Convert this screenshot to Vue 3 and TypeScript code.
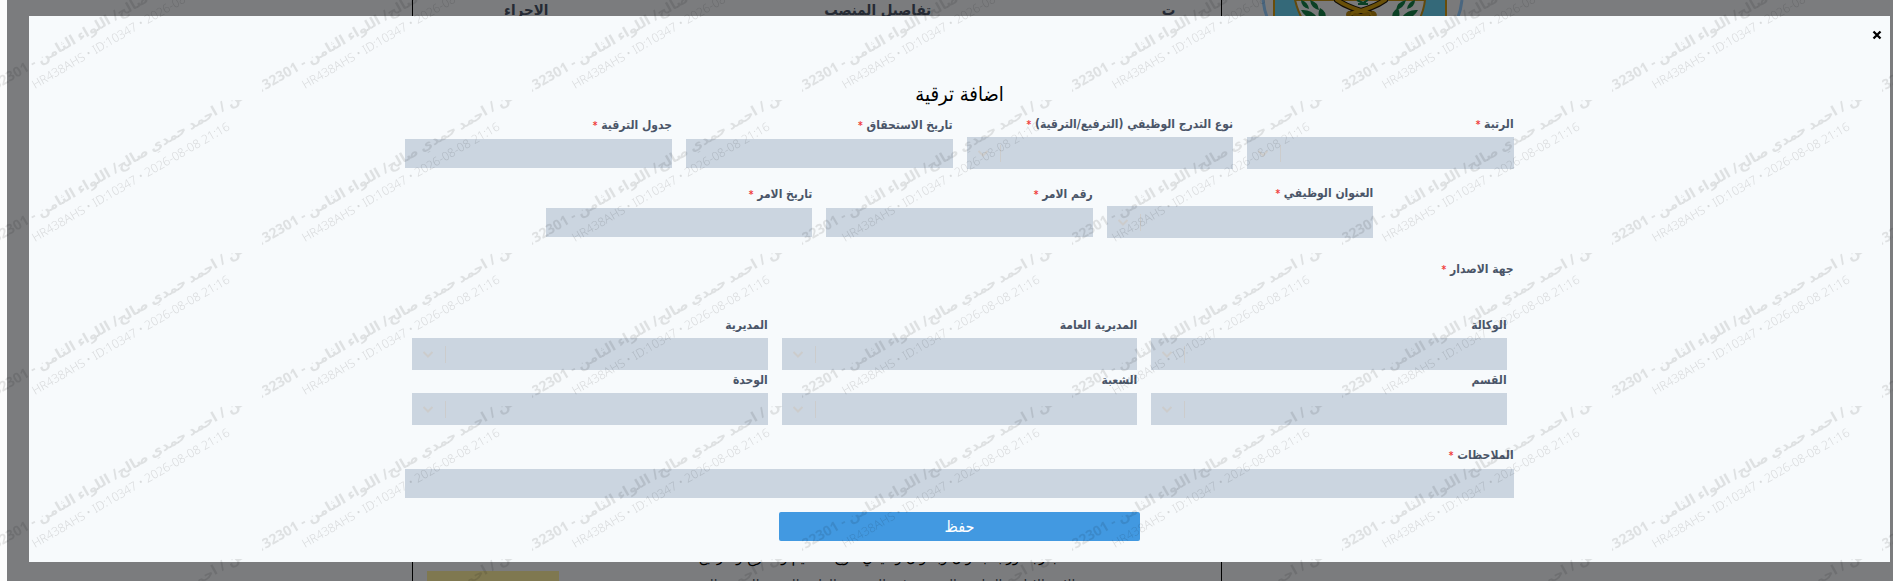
<script setup lang="ts">
import { ref } from 'vue'

interface Field {
  id: string
  label: string
  kind: 'select' | 'text'
  required?: boolean
}

const firstRow: Field[] = [
  { id: 'rank', label: 'الرتبة', kind: 'select', required: true },
  { id: 'gradeType', label: 'نوع التدرج الوظيفي (الترفيع/الترقية)', kind: 'select', required: true },
  { id: 'dueDate', label: 'تاريخ الاستحقاق', kind: 'text', required: true },
  { id: 'schedule', label: 'جدول الترقية', kind: 'text', required: true },
]
const secondRow: Field[] = [
  { id: 'jobTitle', label: 'العنوان الوظيفي', kind: 'select', required: true },
  { id: 'orderNo', label: 'رقم الامر', kind: 'text', required: true },
  { id: 'orderDate', label: 'تاريخ الامر', kind: 'text', required: true },
]
const issuer: Field[] = [
  { id: 'agency', label: 'الوكالة', kind: 'select' },
  { id: 'generalDirectorate', label: 'المديرية العامة', kind: 'select' },
  { id: 'directorate', label: 'المديرية', kind: 'select' },
  { id: 'department', label: 'القسم', kind: 'select' },
  { id: 'division', label: 'الشعبة', kind: 'select' },
  { id: 'unit', label: 'الوحدة', kind: 'select' },
]
const rows = [firstRow, secondRow]
const values = ref<Record<string, string>>({})
const notes = ref('')
</script>

<template>
  <div class="screen">
    <main class="page" dir="ltr">
      <div class="side"></div>
      <table class="posts" dir="rtl">
        <thead>
          <tr><th class="num">ت</th><th>تفاصيل المنصب</th><th class="action">الاجراء</th></tr>
        </thead>
        <tbody>
          <tr>
            <td></td>
            <td class="details">
              <p>بدرجة ورتبة بعنوان وبعنوان وظيفي: نوع التقديم والتدرج والترفيع</p>
              <p class="muted">الامر الاداري الخاص بالمنصب في المديرية العامة القسم الشعبة الوحدة</p>
            </td>
            <td class="actions"><span class="mark"></span></td>
          </tr>
        </tbody>
      </table>
      <div class="brand">
        <svg width="240" height="20" viewBox="0 0 240 20" aria-hidden="true">
          <path d="M24 0Q25 10 29 20H33V0zM208 0V20H216Q220 10 221 0z" fill="#f4f5f7" />
          <path d="M23 0Q24 10 28 20M222 0Q221 10 217 20" fill="none" stroke="#94ccff" stroke-width="3" />
          <path d="M34 0H206V20H34z" fill="#68d2f2" />
          <path d="M34 0V20M206 0V20" stroke="#d29a12" stroke-width="2" />
          <path d="M55 0Q58 12 63 20H179Q184 10 185 0z" fill="#f4f5f7" stroke="#c49218" stroke-width="2" />
          <g fill="#168048">
            <path d="M61 0Q68 2 69 9Q61 7 61 0zM70 0Q78 2 79 10Q71 8 70 0zM61 10Q71 9 77 17Q66 20 61 10zM80 8Q88 12 85 20H80Q77 14 80 8z" />
            <path d="M175 0Q168 2 167 9Q175 7 175 0zM166 0Q157 2 156 10Q164 8 166 0zM178 10Q168 9 162 17Q173 20 178 10zM158 8Q150 12 153 20H158Q161 14 158 8z" />
          </g>
          <path d="M117 0L123 3L128 0M118 4H128M125 1V5" fill="none" stroke="#168048" stroke-width="2" />
          <g fill="none" stroke-linecap="round">
            <path d="M97 0Q108 8 132 14M145 0Q134 8 110 14" stroke="#24190a" stroke-width="6" />
            <path d="M97 0Q108 8 132 14M145 0Q134 8 110 14" stroke="#d4a010" stroke-width="4" />
            <path d="M109 13Q107 14 109 17M133 13Q136 14 134 17M115 15L127 18M128 14L116 18" stroke="#b8870e" stroke-width="4" />
          </g>
        </svg>
      </div>
    </main>

    <div class="overlay">
      <section class="modal" role="dialog" aria-labelledby="dialog-title" dir="rtl">
        <button type="button" class="close" aria-label="اغلاق">
          <svg width="10" height="10" viewBox="0 0 10 10"><path d="M1.5 1.5L8.5 8.5M8.5 1.5L1.5 8.5" stroke="#000" stroke-width="2.3" /></svg>
        </button>
        <form class="form" @submit.prevent>
          <h1 id="dialog-title">اضافة ترقية</h1>

          <div v-for="(row, i) in rows" :key="i" class="row">
            <div v-for="f in row" :key="f.id" class="field quarter">
              <label :for="f.id">{{ f.label }} <span v-if="f.required" class="star">*</span></label>
              <div v-if="f.kind === 'select'" class="picker">
                <select :id="f.id" v-model="values[f.id]"></select>
                <svg width="34" height="32" viewBox="0 0 34 32" aria-hidden="true"><path d="M11.5 14L16 18.5L20.5 14" /><path class="bar" d="M33.5 8V25" /></svg>
              </div>
              <input v-else :id="f.id" v-model="values[f.id]" type="text" />
            </div>
          </div>

          <fieldset>
            <legend>جهة الاصدار <span class="star">*</span></legend>
            <div class="thirds">
              <div v-for="f in issuer" :key="f.id" class="field">
                <label :for="f.id">{{ f.label }}</label>
                <div class="picker">
                  <select :id="f.id" v-model="values[f.id]"></select>
                  <svg width="34" height="32" viewBox="0 0 34 32" aria-hidden="true"><path d="M11.5 14L16 18.5L20.5 14" /><path class="bar" d="M33.5 8V25" /></svg>
                </div>
              </div>
            </div>
          </fieldset>

          <div class="field notes">
            <label for="notes">الملاحظات <span class="star">*</span></label>
            <input id="notes" v-model="notes" type="text" />
          </div>
          <button type="submit" class="save">حفظ</button>
        </form>
      </section>
    </div>

    <svg class="watermark" aria-hidden="true">
      <defs>
        <pattern id="stamp" x="-8" y="-53" width="270" height="153" patternUnits="userSpaceOnUse">
          <g transform="rotate(-30 140 86)" text-anchor="middle">
            <text class="who" x="166" y="67" direction="rtl">اللواء الثامن / احمد حمدي صالح/ اللواء الثامن - 132301</text>
            <text class="when" x="141" y="86">HR438AHS • ID:10347 • 2026-08-08 21:16</text>
          </g>
        </pattern>
      </defs>
      <rect width="100%" height="100%" fill="url(#stamp)" />
    </svg>
  </div>
</template>

<style>
body {
  margin: 0;
  background: #fcfcfc;
}
</style>

<style scoped>
.screen {
  position: relative;
  height: 100vh;
  overflow: hidden;
  font-family: "DejaVu Sans Condensed", "DejaVu Sans", "Noto Sans", sans-serif;
}
.page {
  display: grid;
  grid-template-columns: 405fr 810fr 671fr;
  min-height: calc(100% + 18px);
  margin-left: 7px;
  background: #f7f9fc;
}
.posts {
  width: 100%;
  table-layout: fixed;
  border-collapse: collapse;
  border-left: 1px solid #000;
  border-right: 1px solid #000;
}
th {
  height: 20px;
  padding: 0;
  color: #4a5568;
  font-size: 15px;
  line-height: 20px;
}
.num {
  width: 13%;
}
.action {
  width: 28%;
}
td {
  padding: 0;
  vertical-align: bottom;
}
.details p {
  margin: 0;
  color: #000;
  font-size: 15px;
  line-height: 28px;
  text-align: center;
  white-space: nowrap;
}
.details .muted {
  color: #4a5568;
}
.actions {
  padding-left: 14px;
}
.mark {
  display: block;
  width: 132px;
  height: 28px;
  margin-right: auto;
  background: #fff0a0;
}
.brand svg {
  display: block;
  margin-left: 18px;
}
.overlay {
  position: absolute;
  inset: 0 0 0 7px;
  padding: 16px 3px 0 22px;
  background: rgba(0, 0, 0, 0.5);
}
.modal {
  position: relative;
  padding: 64px 0 21px;
  background: #f7fafc;
}
.close {
  position: absolute;
  top: 9px;
  right: 3px;
  display: grid;
  place-items: center;
  width: 20px;
  height: 20px;
  padding: 0;
  border: 0;
  background: none;
}
.form {
  width: 60.3%;
  margin: 0 auto;
}
h1 {
  margin: 0 0 6px;
  color: #000;
  font-size: 20px;
  font-weight: 400;
  line-height: 28px;
  text-align: center;
}
.row {
  display: flex;
  align-items: center;
  justify-content: center;
  margin-bottom: 14px;
}
.field {
  box-sizing: border-box;
  padding: 0 7px;
}
.quarter {
  width: 25%;
}
label,
legend {
  display: block;
  padding: 0;
  color: #4a5568;
  font-size: 12px;
  font-weight: 700;
  line-height: 20px;
  white-space: nowrap;
}
.star {
  color: #f03e3e;
  font-size: 10px;
  line-height: 1;
}
input,
select {
  display: block;
  box-sizing: border-box;
  width: 100%;
  border: 0;
  border-radius: 0;
  background: #cbd5e0;
  appearance: none;
  font: inherit;
}
input {
  height: 29px;
  margin-top: 4px;
}
select {
  height: 32px;
}
.picker {
  position: relative;
  margin-top: 3px;
}
.picker svg {
  position: absolute;
  top: 0;
  left: 0;
  fill: none;
  stroke: #cccccc;
  stroke-width: 2;
  pointer-events: none;
}
.picker .bar {
  stroke-width: 1;
}
fieldset {
  min-width: 0;
  margin: 21px 7px 20px;
  padding: 0;
  border: 0;
}
legend {
  margin-bottom: 36px;
}
.thirds {
  display: grid;
  grid-template-columns: repeat(3, 1fr);
}
.save {
  display: block;
  width: calc(100% / 3 - 14px);
  height: 29px;
  margin: 14px auto 0;
  padding: 0;
  border: 0;
  border-radius: 2px;
  background: #4299e1;
  color: #fff;
  font-family: inherit;
  font-size: 16px;
  line-height: 29px;
}
.watermark {
  position: absolute;
  inset: 0;
  width: 100%;
  height: 100%;
  pointer-events: none;
}
.who,
.when {
  font-family: "Noto Sans", "DejaVu Sans", sans-serif;
  fill: #000;
}
.who {
  font-size: 14px;
  font-weight: 700;
  fill-opacity: 0.1;
}
.when {
  font-size: 12px;
  font-weight: 300;
  fill-opacity: 0.13;
}
</style>
